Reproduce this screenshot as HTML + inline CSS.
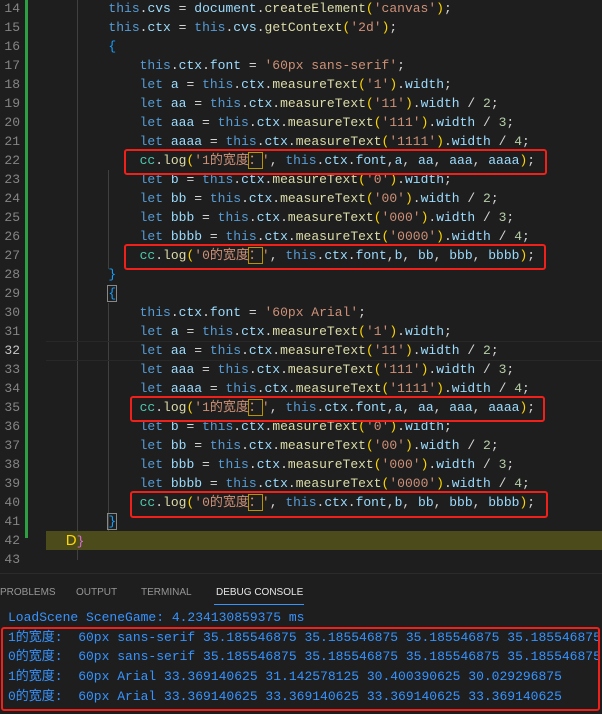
<!DOCTYPE html>
<html><head><meta charset="utf-8"><style>
body{margin:0;width:602px;height:714px;background:#1e1e1e;overflow:hidden;position:relative;font-family:"Liberation Mono","Noto Sans CJK SC",monospace;}
.ln{position:absolute;left:0;width:20px;text-align:right;color:#858585;font-size:13px;line-height:19px;}
.code{position:absolute;left:46px;font-size:13px;line-height:19px;white-space:pre;color:#d4d4d4;}
.k{color:#569cd6}.v{color:#9cdcfe}.f{color:#dcdcaa}.s{color:#ce9178}.c{color:#4ec9b0}.p{color:#ffd700}.n{color:#b5cea8}.br{color:#179fff}.pu{color:#da70d6}
.rb{position:absolute;border:2px solid #f0201a;border-radius:3px;}
.guide{position:absolute;width:1px;background:#404040;}
.tab{position:absolute;top:587px;font-family:"Liberation Sans",sans-serif;font-size:10px;color:#969696;}
.con{position:absolute;left:8px;font-size:13px;line-height:19.7px;white-space:pre;color:#3794ff;}
.yb{outline:1px solid #b89500;}
</style></head><body>
<div style="position:absolute;left:25px;top:0;width:3px;height:538px;background:#2ea043"></div>
<div class="guide" style="left:77px;top:0;height:560px"></div>
<div class="guide" style="left:108px;top:170px;height:99px"></div>
<div class="guide" style="left:108px;top:303px;height:230px"></div>
<div style="position:absolute;left:46px;right:0;top:341px;height:18px;border-top:1px solid #282828;border-bottom:1px solid #282828"></div>
<div style="position:absolute;left:46px;right:0;top:531px;height:19px;background:#4b4b1c"></div>
<div class="ln" style="top:-1.5px">14<br>15<br>16<br>17<br>18<br>19<br>20<br>21<br>22<br>23<br>24<br>25<br>26<br>27<br>28<br>29<br>30<br>31<br><span style="color:#c6c6c6">32</span><br>33<br>34<br>35<br>36<br>37<br>38<br>39<br>40<br>41<br>42<br>43</div>
<div class="code" style="top:-1.5px">        <span class="k">this</span>.<span class="v">cvs</span> = <span class="v">document</span>.<span class="f">createElement</span><span class="p">(</span><span class="s">'canvas'</span><span class="p">)</span>;
        <span class="k">this</span>.<span class="v">ctx</span> = <span class="k">this</span>.<span class="v">cvs</span>.<span class="f">getContext</span><span class="p">(</span><span class="s">'2d'</span><span class="p">)</span>;
        <span class="br">{</span>
            <span class="k">this</span>.<span class="v">ctx</span>.<span class="v">font</span> = <span class="s">'60px sans-serif'</span>;
            <span class="k">let</span> <span class="v">a</span> = <span class="k">this</span>.<span class="v">ctx</span>.<span class="f">measureText</span><span class="p">(</span><span class="s">'1'</span><span class="p">)</span>.<span class="v">width</span>;
            <span class="k">let</span> <span class="v">aa</span> = <span class="k">this</span>.<span class="v">ctx</span>.<span class="f">measureText</span><span class="p">(</span><span class="s">'11'</span><span class="p">)</span>.<span class="v">width</span> / <span class="n">2</span>;
            <span class="k">let</span> <span class="v">aaa</span> = <span class="k">this</span>.<span class="v">ctx</span>.<span class="f">measureText</span><span class="p">(</span><span class="s">'111'</span><span class="p">)</span>.<span class="v">width</span> / <span class="n">3</span>;
            <span class="k">let</span> <span class="v">aaaa</span> = <span class="k">this</span>.<span class="v">ctx</span>.<span class="f">measureText</span><span class="p">(</span><span class="s">'1111'</span><span class="p">)</span>.<span class="v">width</span> / <span class="n">4</span>;
            <span class="c">cc</span>.<span class="f">log</span><span class="p">(</span><span class="s">'1的宽度<span class="yb">：</span>'</span>, <span class="k">this</span>.<span class="v">ctx</span>.<span class="v">font</span>,<span class="v">a</span>, <span class="v">aa</span>, <span class="v">aaa</span>, <span class="v">aaaa</span><span class="p">)</span>;
            <span class="k">let</span> <span class="v">b</span> = <span class="k">this</span>.<span class="v">ctx</span>.<span class="f">measureText</span><span class="p">(</span><span class="s">'0'</span><span class="p">)</span>.<span class="v">width</span>;
            <span class="k">let</span> <span class="v">bb</span> = <span class="k">this</span>.<span class="v">ctx</span>.<span class="f">measureText</span><span class="p">(</span><span class="s">'00'</span><span class="p">)</span>.<span class="v">width</span> / <span class="n">2</span>;
            <span class="k">let</span> <span class="v">bbb</span> = <span class="k">this</span>.<span class="v">ctx</span>.<span class="f">measureText</span><span class="p">(</span><span class="s">'000'</span><span class="p">)</span>.<span class="v">width</span> / <span class="n">3</span>;
            <span class="k">let</span> <span class="v">bbbb</span> = <span class="k">this</span>.<span class="v">ctx</span>.<span class="f">measureText</span><span class="p">(</span><span class="s">'0000'</span><span class="p">)</span>.<span class="v">width</span> / <span class="n">4</span>;
            <span class="c">cc</span>.<span class="f">log</span><span class="p">(</span><span class="s">'0的宽度<span class="yb">：</span>'</span>, <span class="k">this</span>.<span class="v">ctx</span>.<span class="v">font</span>,<span class="v">b</span>, <span class="v">bb</span>, <span class="v">bbb</span>, <span class="v">bbbb</span><span class="p">)</span>;
        <span class="br">}</span>
        <span class="br" style="outline:1px solid #888">{</span>
            <span class="k">this</span>.<span class="v">ctx</span>.<span class="v">font</span> = <span class="s">'60px Arial'</span>;
            <span class="k">let</span> <span class="v">a</span> = <span class="k">this</span>.<span class="v">ctx</span>.<span class="f">measureText</span><span class="p">(</span><span class="s">'1'</span><span class="p">)</span>.<span class="v">width</span>;
            <span class="k">let</span> <span class="v">aa</span> = <span class="k">this</span>.<span class="v">ctx</span>.<span class="f">measureText</span><span class="p">(</span><span class="s">'11'</span><span class="p">)</span>.<span class="v">width</span> / <span class="n">2</span>;
            <span class="k">let</span> <span class="v">aaa</span> = <span class="k">this</span>.<span class="v">ctx</span>.<span class="f">measureText</span><span class="p">(</span><span class="s">'111'</span><span class="p">)</span>.<span class="v">width</span> / <span class="n">3</span>;
            <span class="k">let</span> <span class="v">aaaa</span> = <span class="k">this</span>.<span class="v">ctx</span>.<span class="f">measureText</span><span class="p">(</span><span class="s">'1111'</span><span class="p">)</span>.<span class="v">width</span> / <span class="n">4</span>;
            <span class="c">cc</span>.<span class="f">log</span><span class="p">(</span><span class="s">'1的宽度<span class="yb">：</span>'</span>, <span class="k">this</span>.<span class="v">ctx</span>.<span class="v">font</span>,<span class="v">a</span>, <span class="v">aa</span>, <span class="v">aaa</span>, <span class="v">aaaa</span><span class="p">)</span>;
            <span class="k">let</span> <span class="v">b</span> = <span class="k">this</span>.<span class="v">ctx</span>.<span class="f">measureText</span><span class="p">(</span><span class="s">'0'</span><span class="p">)</span>.<span class="v">width</span>;
            <span class="k">let</span> <span class="v">bb</span> = <span class="k">this</span>.<span class="v">ctx</span>.<span class="f">measureText</span><span class="p">(</span><span class="s">'00'</span><span class="p">)</span>.<span class="v">width</span> / <span class="n">2</span>;
            <span class="k">let</span> <span class="v">bbb</span> = <span class="k">this</span>.<span class="v">ctx</span>.<span class="f">measureText</span><span class="p">(</span><span class="s">'000'</span><span class="p">)</span>.<span class="v">width</span> / <span class="n">3</span>;
            <span class="k">let</span> <span class="v">bbbb</span> = <span class="k">this</span>.<span class="v">ctx</span>.<span class="f">measureText</span><span class="p">(</span><span class="s">'0000'</span><span class="p">)</span>.<span class="v">width</span> / <span class="n">4</span>;
            <span class="c">cc</span>.<span class="f">log</span><span class="p">(</span><span class="s">'0的宽度<span class="yb">：</span>'</span>, <span class="k">this</span>.<span class="v">ctx</span>.<span class="v">font</span>,<span class="v">b</span>, <span class="v">bb</span>, <span class="v">bbb</span>, <span class="v">bbbb</span><span class="p">)</span>;
        <span class="br" style="outline:1px solid #888">}</span>
  <span class="p" style="font-size:15px;font-family:'Liberation Sans',sans-serif"> D</span><span class="pu">}</span>
</div>
<div class="rb" style="left:124px;top:149px;width:419px;height:22px"></div>
<div class="rb" style="left:124px;top:244px;width:418px;height:22px"></div>
<div class="rb" style="left:130px;top:396px;width:411px;height:22px"></div>
<div class="rb" style="left:130px;top:491px;width:414px;height:23px"></div>
<div style="position:absolute;left:0;right:0;top:573px;height:1px;background:#2b2b2b"></div>
<div class="tab" style="left:0">PROBLEMS</div>
<div class="tab" style="left:76px">OUTPUT</div>
<div class="tab" style="left:141px">TERMINAL</div>
<div class="tab" style="left:216px;color:#e7e7e7">DEBUG CONSOLE</div>
<div style="position:absolute;left:214px;top:604px;width:90px;height:1px;background:#3794ff"></div>
<div class="con" style="top:608px">LoadScene SceneGame: 4.234130859375 ms
1的宽度:  60px sans-serif 35.185546875 35.185546875 35.185546875 35.185546875
0的宽度:  60px sans-serif 35.185546875 35.185546875 35.185546875 35.185546875
1的宽度:  60px Arial 33.369140625 31.142578125 30.400390625 30.029296875
0的宽度:  60px Arial 33.369140625 33.369140625 33.369140625 33.369140625</div>
<div class="rb" style="left:1px;top:627px;width:595px;height:80px"></div>
</body></html>
